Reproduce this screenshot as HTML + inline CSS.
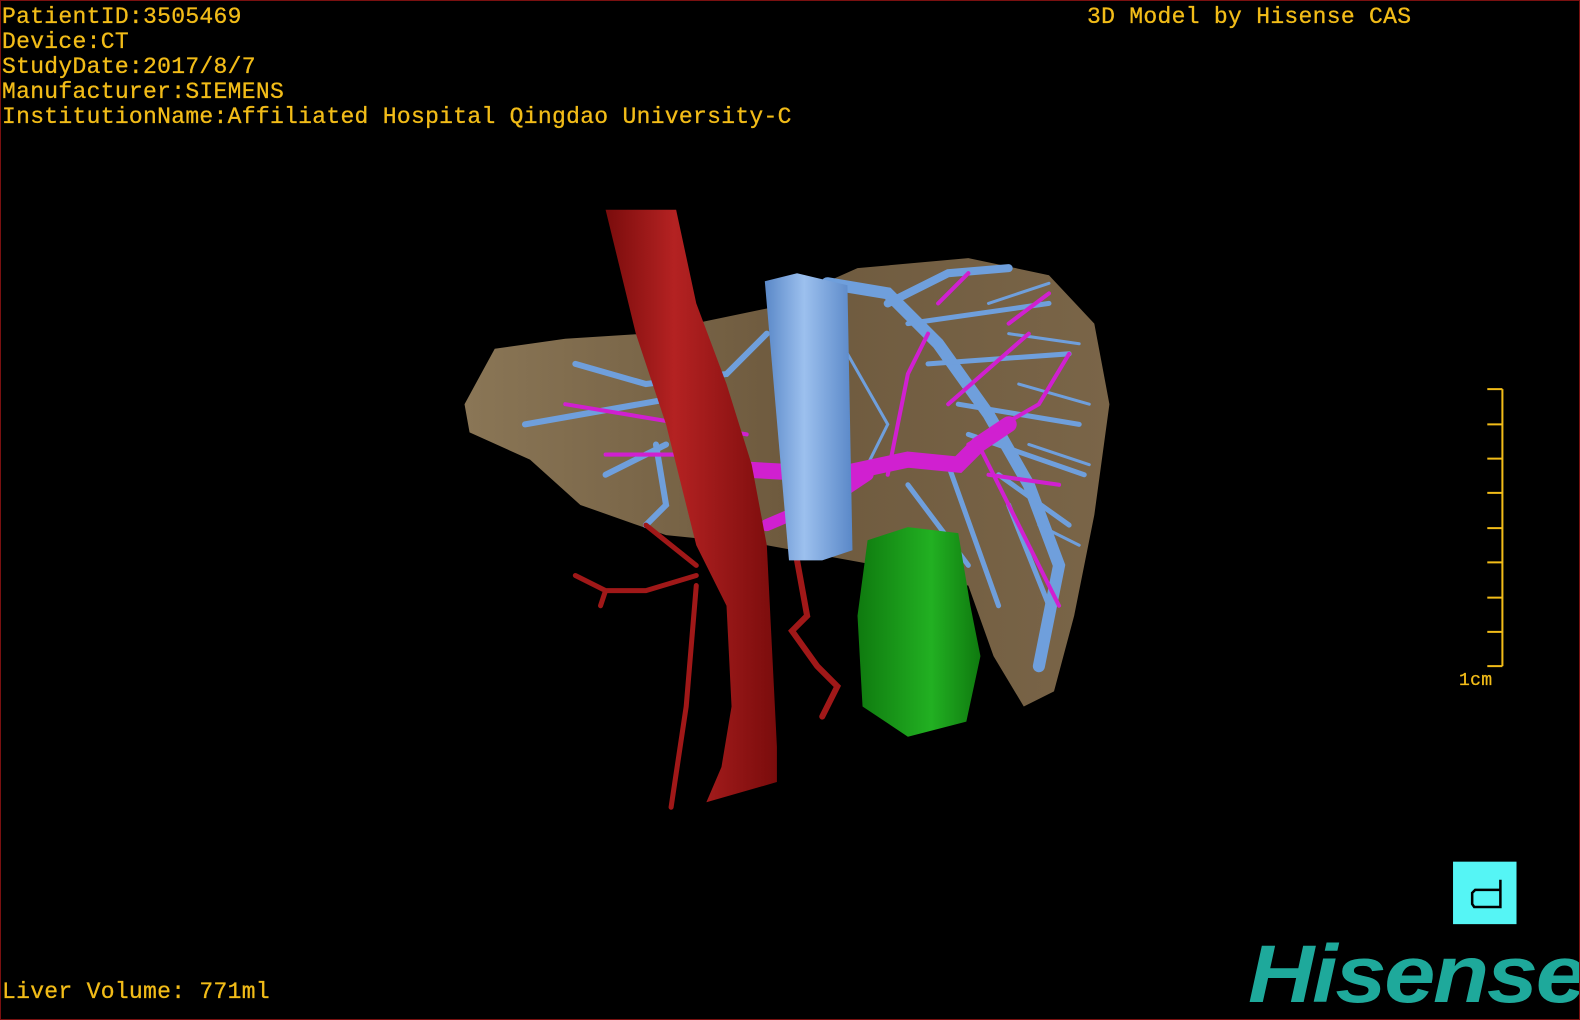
<!DOCTYPE html>
<html><head><meta charset="utf-8"><style>
html,body{margin:0;padding:0;background:#000;}
#w{position:relative;width:1578px;height:1018px;border:1px solid #7a1010;background:#000;overflow:hidden;}
.t{position:absolute;font-family:"Liberation Mono",monospace;font-size:23px;color:#f2bc18;line-height:25px;white-space:pre;letter-spacing:0.3px;-webkit-text-stroke:0.3px #f2bc18;}
svg{position:absolute;left:0;top:0;}
</style></head><body><div id="w">
<svg width="1580" height="1020" viewBox="0 0 1568 1012">
<defs>
<linearGradient id="lv" x1="0" x2="1"><stop offset="0" stop-color="#8a7656"/><stop offset="0.5" stop-color="#6e5a3e"/><stop offset="1" stop-color="#7a6548"/></linearGradient>
<linearGradient id="ao" x1="0" x2="1"><stop offset="0" stop-color="#7a0c0c"/><stop offset="0.4" stop-color="#b42222"/><stop offset="1" stop-color="#7a0c0c"/></linearGradient>
<linearGradient id="iv" x1="0" x2="1"><stop offset="0" stop-color="#5a88c8"/><stop offset="0.45" stop-color="#9cc0ee"/><stop offset="1" stop-color="#5a88c8"/></linearGradient>
<linearGradient id="gb" x1="0" x2="1"><stop offset="0" stop-color="#0f7a0f"/><stop offset="0.6" stop-color="#22b022"/><stop offset="1" stop-color="#0f7a0f"/></linearGradient>
</defs>
<path d="M460 400 L490 345 L560 335 L640 330 L760 305 L850 265 L960 255 L1040 272 L1085 320 L1100 400 L1085 510 L1065 610 L1045 685 L1015 700 L985 650 L960 580 L870 560 L760 540 L660 530 L575 500 L525 455 L465 428 Z" fill="url(#lv)"/>
<g stroke="#6f9fdc" fill="none" stroke-linecap="round">
<path d="M820 280 L880 290 L930 340 L980 410 L1020 480 L1050 560 L1030 660" stroke-width="12"/>
<path d="M880 300 L940 270 L1000 265" stroke-width="8"/>
<path d="M900 320 L1040 300 M920 360 L1060 350 M950 400 L1070 420 M960 430 L1075 470 M990 470 L1060 520 M1000 500 L1040 600 M940 460 L990 600 M900 480 L960 560" stroke-width="5"/>
<path d="M760 330 L720 370 L640 380 L570 360 M690 390 L520 420 M660 440 L600 470 M650 440 L660 500 L640 520" stroke-width="6"/>
<path d="M980 300 L1040 280 M1000 330 L1070 340 M1010 380 L1080 400 M1020 440 L1080 460 M1030 520 L1070 540 M840 350 L880 420 L860 460" stroke-width="3"/>
</g>
<g stroke="#d020d0" fill="none" stroke-linecap="round">
<path d="M740 465 L830 470 L900 455 L950 460 L970 440 L1000 420" stroke-width="16"/>
<path d="M760 520 L830 490 L860 470" stroke-width="12"/>
<path d="M740 430 L560 400 M700 450 L600 450 M880 470 L900 370 L920 330 M960 440 L1030 400 L1060 350 M970 440 L1010 520 L1050 600 M930 300 L960 270 M1000 320 L1040 290 M940 400 L1020 330 M980 470 L1050 480" stroke-width="4"/>
</g>
<path d="M600 207 L670 207 L690 300 L720 380 L745 460 L760 540 L765 640 L770 740 L770 775 L700 795 L715 760 L725 700 L720 600 L690 540 L660 420 L630 330 Z" fill="url(#ao)"/>
<g stroke="#a01818" fill="none" stroke-linecap="round">
<path d="M690 560 L640 520 M690 570 L640 585 L600 585 L570 570 M600 585 L595 600 M690 580 L680 700 L665 800" stroke-width="5"/>
<path d="M790 555 L800 610 L785 625 L810 660 L830 680 L815 710" stroke-width="6"/>
</g>
<path d="M758 278 L790 270 L840 282 L845 545 L815 555 L782 555 Z" fill="url(#iv)"/>
<path d="M860 535 L900 522 L950 528 L962 600 L972 650 L958 715 L900 730 L855 700 L850 610 Z" fill="url(#gb)"/>
<g stroke="#f2bc18" stroke-width="2" fill="none">
<path d="M1490 385 L1490 660 M1475 385 L1490 385 M1475 420 L1490 420 M1475 454 L1490 454 M1475 488 L1490 488 M1475 523 L1490 523 M1475 557 L1490 557 M1475 592 L1490 592 M1475 626 L1490 626 M1475 660 L1490 660"/>
</g>
<rect x="1441" y="854" width="63" height="62" fill="#55f5f5"/>
<path d="M1488 872 L1488 899 L1462 899 L1460 896 L1460 885 L1463 882 L1488 882" stroke="#000" stroke-width="2.5" fill="none"/>
</svg>
<div class="t" style="left:1px;top:4px">PatientID:3505469
Device:CT
StudyDate:2017/8/7
Manufacturer:SIEMENS
InstitutionName:Affiliated Hospital Qingdao University-C</div>
<div class="t" style="left:1086px;top:4px">3D Model by Hisense CAS</div>
<div class="t" style="left:1px;top:979px">Liver Volume: 771ml</div>
<div class="t" style="left:1458px;top:668px;font-size:18px">1cm</div>
<div style="position:absolute;left:1247px;top:932px;font-family:'Liberation Sans',sans-serif;font-weight:bold;font-style:italic;font-size:82px;color:#1ea99b;letter-spacing:-2px;line-height:84px;transform:scaleX(1.12);transform-origin:left">Hisense</div>
</div></body></html>
